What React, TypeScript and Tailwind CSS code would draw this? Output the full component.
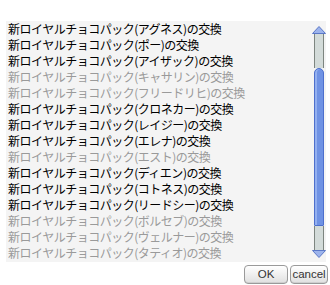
import React from "react";

const items: { name: string; enabled: boolean }[] = [
  { name: "アグネス", enabled: true },
  { name: "ポー", enabled: true },
  { name: "アイザック", enabled: true },
  { name: "キャサリン", enabled: false },
  { name: "フリードリヒ", enabled: false },
  { name: "クロネカー", enabled: true },
  { name: "レイジー", enabled: true },
  { name: "エレナ", enabled: true },
  { name: "エスト", enabled: false },
  { name: "ディエン", enabled: true },
  { name: "コトネス", enabled: true },
  { name: "リードシー", enabled: true },
  { name: "ボルセブ", enabled: false },
  { name: "ヴェルナー", enabled: false },
  { name: "タティオ", enabled: false },
];

function ScrollBar() {
  return (
    <div className="flex flex-col items-center w-[14px] pt-[5px]">
      <svg width="14" height="8" viewBox="0 0 14 8">
        <path d="M7 0.5 L13.5 7.5 L0.5 7.5 Z" fill="#9db4ec" stroke="#5b78c8" />
      </svg>
      <div className="w-[10px] h-[34px] bg-[#d3dbd9] border-x border-[#7d8580]" />
      <div className="w-[10px] h-[158px] bg-[#6f92e4] border border-[#4d6fcc] rounded-t-[5px] rounded-b-[1px] shadow-[inset_2px_0_0_#93b0f0]" />
      <div className="w-[10px] h-[24px] bg-[#d3dbd9] border-x border-[#7d8580]" />
      <svg width="14" height="8" viewBox="0 0 14 8">
        <path d="M0.5 0.5 L13.5 0.5 L7 7.5 Z" fill="#9db4ec" stroke="#5b78c8" />
      </svg>
    </div>
  );
}

function Button({ label, width }: { label: string; width: string }) {
  return (
    <button
      className={`${width} h-[19px] px-0 rounded-[4px] border border-[#9a9a9a] bg-gradient-to-b from-[#ffffff] to-[#e0e0e0] text-[11.5px] leading-[17px] text-[#333] shadow-[inset_0_-1px_0_#cfcfcf]`}
      style={{ fontFamily: '"Liberation Sans", sans-serif' }}
    >
      {label}
    </button>
  );
}

export default function App() {
  return (
    <div
      className="w-[330px] h-[285px] bg-white overflow-hidden"
      style={{ fontFamily: '"Noto Sans CJK JP", "Liberation Sans", sans-serif' }}
    >
      <div className="pt-[21px] pl-[6px] pr-[4px]">
        <div className="flex h-[241px] bg-[#f4f4f4] overflow-hidden">
          <div className="flex-1 pl-[2px]">
            {items.map((it) => (
              <div
                key={it.name}
                className={`h-[16px] leading-[16px] text-[12px] tracking-[-0.5px] whitespace-nowrap ${
                  it.enabled ? "text-black" : "text-[#9a9a9a]"
                }`}
              >
                新ロイヤルチョコパック({it.name})の交換
              </div>
            ))}
          </div>
          <ScrollBar />
        </div>
      </div>
      <div className="flex justify-end gap-[2px] pr-[2px] pt-[3px]">
        <Button label="OK" width="w-[44px]" />
        <Button label="cancel" width="w-[38px]" />
      </div>
    </div>
  );
}
